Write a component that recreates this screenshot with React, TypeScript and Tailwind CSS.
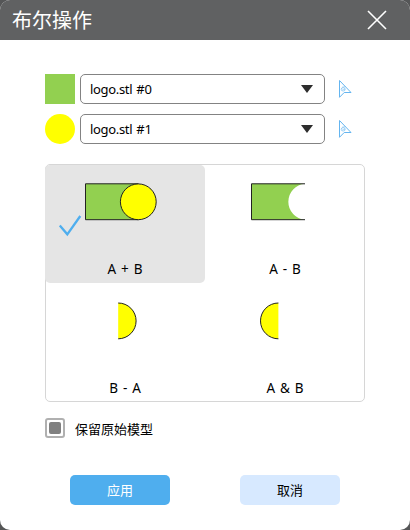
import type { ReactNode } from "react";

function PickIcon() {
  return (
    <svg className="ml-3 h-[22px] w-4 shrink-0" viewBox="0 0 16 22" fill="none" stroke="#64b5f0">
      <path d="M2.5 2.5 L14 14.5 H7.2 L2.5 19.3 Z" strokeWidth="1" />
      <ellipse cx="6.2" cy="11.3" rx="2" ry="1.7" strokeWidth="0.8" opacity="0.8" />
      <path d="M5 9.2 L8.6 8.6 M5.4 11.4 H8" strokeWidth="0.7" opacity="0.7" />
    </svg>
  );
}

function ModelRow({ swatch, name }: { swatch: ReactNode; name: string }) {
  return (
    <div className="flex h-[30px] items-center">
      {swatch}
      <button className="ml-[5px] flex h-[30px] w-[245px] items-center justify-between rounded-[5px] border border-[#838383] bg-white pr-[11px] pl-[9px]">
        <span className="text-[13px] leading-[18px] tracking-[-0.32px] whitespace-nowrap [word-spacing:1px]">{name}</span>
        <svg width="12" height="8" viewBox="0 0 12 8">
          <path d="M0 0 H12 L6 8 Z" fill="#2d2d2d" />
        </svg>
      </button>
      <PickIcon />
    </div>
  );
}

function Cell({ label, selected = false, children }: { label: string; selected?: boolean; children: ReactNode }) {
  return (
    <button className={selected ? "flex h-[118px] w-40 flex-col items-center rounded-[5px] bg-[#e5e5e5]" : "flex h-[118px] w-40 flex-col items-center rounded-[5px]"}>
      <svg className="h-[94px] w-40 shrink-0" viewBox="0 0 160 94" fill="none">
        {children}
      </svg>
      <span className="text-[13.5px] leading-[20px] [word-spacing:1.4px]">{label}</span>
    </button>
  );
}

export default function App() {
  return (
    <div className="h-[530px] w-[410px] bg-[#555657] font-['Noto_Sans','Noto_Sans_CJK_SC',sans-serif] text-black">
      <div className="flex h-[530px] flex-col overflow-hidden rounded-[10px] bg-white">
        <header className="flex h-10 shrink-0 items-center justify-between bg-[#606162] pr-[23px] pl-3">
          <h1 className="font-['Noto_Sans_CJK_SC',sans-serif] text-[20px] leading-[30px] font-normal text-white">布尔操作</h1>
          <svg width="20" height="20" viewBox="0 0 20 20" stroke="white" strokeWidth="1.6">
            <path d="M1 1 L19 19 M19 1 L1 19" />
          </svg>
        </header>
        <main className="flex flex-col px-[45px] pt-[34px]">
          <div className="flex flex-col gap-[10px]">
            <ModelRow name="logo.stl #0" swatch={<div className="size-[30px] shrink-0 bg-[#92d050]" />} />
            <ModelRow name="logo.stl #1" swatch={<div className="size-[30px] shrink-0 rounded-full bg-[#ffff00]" />} />
          </div>
          <div className="mt-5 h-[238px] w-[320px] rounded-[5px] border border-[#d6d6d6]">
            <div className="-ml-px grid w-[320px] grid-cols-2 gap-y-px">
              <Cell label="A + B" selected>
                <path d="M93.5 18.8 H40.5 V54.7 H93.5" fill="#92d050" stroke="#222" />
                <circle cx="93.3" cy="36.8" r="17.9" fill="#ffff00" stroke="#222" />
                <path d="M14.8 60.5 L22.3 69.3 L35.3 51" stroke="#4faeee" strokeWidth="2.3" />
              </Cell>
              <Cell label="A - B">
                <path d="M100 18.8 H46.5 V54.7 H100 A18 18 0 0 1 100 18.8 Z" fill="#92d050" />
                <path d="M100 18.8 H46.5 V54.7 H100" stroke="#222" />
              </Cell>
              <Cell label="B - A">
                <path d="M73.2 19 A17.9 17.9 0 0 1 73.2 54.8 Z" fill="#ffff00" />
                <path d="M73.2 19 A17.9 17.9 0 0 1 73.2 54.8" stroke="#222" />
              </Cell>
              <Cell label="A &amp; B">
                <path d="M73.4 19 A17.9 17.9 0 0 0 73.4 54.8 Z" fill="#ffff00" />
                <path d="M73.4 19 A17.9 17.9 0 0 0 73.4 54.8" stroke="#222" />
              </Cell>
            </div>
          </div>
          <label className="mt-4 flex h-5 items-center">
            <span className="flex size-5 items-center justify-center rounded-[3px] border-2 border-[#b0b0b0] bg-white">
              <span className="size-3 rounded-[2px] bg-[#808080]" />
            </span>
            <span className="ml-[10px] pt-px font-['Noto_Sans_CJK_SC',sans-serif] text-[13px] leading-5">保留原始模型</span>
          </label>
          <div className="mt-[37px] flex gap-[70px] pl-[25px] font-['Noto_Sans_CJK_SC',sans-serif] text-[13px]">
            <button className="h-[30px] w-[100px] rounded-[5px] bg-[#4faeee] text-white">应用</button>
            <button className="h-[30px] w-[100px] rounded-[5px] bg-[#d7e9ff]">取消</button>
          </div>
        </main>
      </div>
    </div>
  );
}
